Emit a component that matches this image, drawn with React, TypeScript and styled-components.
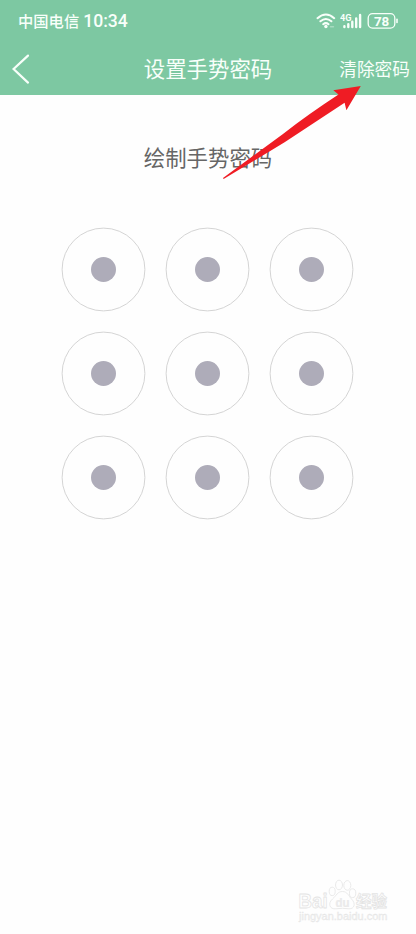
import React from 'react';
import styled, { createGlobalStyle } from 'styled-components';

const GlobalStyle = createGlobalStyle`
  * { box-sizing: border-box; }
  body { margin: 0; background: #fefefe; font-family: "Noto Sans CJK SC", sans-serif; }
`;

const Screen = styled.div`
  position: relative;
  width: 416px;
  height: 934px;
  overflow: hidden;
  background: #fefefe;
  display: flex;
  flex-direction: column;
`;

const Header = styled.header`
  height: 95.4px;
  flex: none;
  background: #7dc8a2;
  color: #f8fffa;
`;

const StatusBar = styled.div`
  height: 41px;
  padding: 0 17px 0 18px;
  display: flex;
  align-items: center;
  justify-content: space-between;
`;

const StatusGroup = styled.div`
  display: flex;
  align-items: center;
  line-height: 20px;
`;

const StatusIcons = styled(StatusGroup)`
  gap: 4px;
`;

const Carrier = styled.span`
  padding-bottom: 2px;
  font-size: 15.3px;
  font-weight: 500;
  white-space: nowrap;
`;

const Clock = styled.span`
  margin-left: 4px;
  font-family: Roboto, sans-serif;
  font-size: 17.6px;
  font-weight: 500;
  white-space: nowrap;
`;

const NavBar = styled.nav`
  height: 54px;
  display: grid;
  grid-template-columns: 100px 1fr 100px;
  align-items: center;
  line-height: 30px;
  white-space: nowrap;
`;

const BackButton = styled.button`
  border: 0;
  padding: 2px 0 0 11px;
  background: none;
  color: inherit;
  display: flex;
`;

const Title = styled.h1`
  margin: 0;
  font-size: 21.4px;
  font-weight: 400;
  line-height: 30px;
  text-align: center;
`;

const ClearButton = styled.button`
  border: 0;
  padding: 0 6px 0 0;
  background: none;
  color: inherit;
  font: 400 17.7px/30px "Noto Sans CJK SC", sans-serif;
  text-align: right;
  white-space: nowrap;
`;

const Main = styled.main`
  display: flex;
  flex-direction: column;
  align-items: center;
`;

const Prompt = styled.p`
  margin: 47px 0 0;
  height: 30px;
  color: #666;
  font-size: 21.4px;
  line-height: 30px;
`;

const PatternGrid = styled.div`
  margin: 55.6px 1px 0 0;
  display: grid;
  grid-template-columns: repeat(3, 83px);
  gap: 20.8px;
`;

const Node = styled.svg`
  display: block;
  width: 83px;
  height: 83px;
  overflow: visible;
`;

const Overlay = styled.svg`
  position: absolute;
  inset: 0;
  pointer-events: none;
`;

const Watermark = styled.svg`
  position: absolute;
  left: 296px;
  top: 876px;
`;

const WifiIcon = () => (
  <svg width="20" height="16" viewBox="0 0 20 16" fill="none" stroke="currentColor" strokeWidth="2" strokeLinecap="round">
    <path d="M1.5 5.2Q10-2.2 18.2 5.2M4.4 8.3Q9.9 3.7 15.4 8.3M7.2 11.2Q9.9 9.1 12.5 11.2" />
    <circle cx="9.9" cy="13.5" r="1.7" fill="currentColor" stroke="none" />
    <path d="M14.5 13.7h3" strokeWidth="1.4" opacity=".35" />
  </svg>
);

const SignalIcon = () => (
  <svg width="23" height="18" viewBox="0 0 23 18" fill="currentColor">
    <text x="0" y="8.5" fontFamily="Roboto, sans-serif" fontSize="9.8" fontWeight="700" textLength="11.5" lengthAdjust="spacingAndGlyphs">4G</text>
    <g stroke="currentColor" strokeWidth="2.4" strokeLinecap="round">
      <path d="M4.4 14.2v.8M8.3 12.2V15M12.3 9.8V15M16.2 6.4V15M20.1 3V15" />
    </g>
  </svg>
);

const BatteryIcon = () => (
  <svg width="32" height="18" viewBox="0 0 32 18" fill="none" stroke="currentColor">
    <rect x="1.2" y="1.6" width="26.6" height="14.5" rx="4.4" strokeWidth="1.3" />
    <path d="M30 7.4v3" strokeWidth="1.6" strokeLinecap="round" />
    <text x="14.6" y="13.6" textAnchor="middle" fill="currentColor" stroke="none" fontFamily="Roboto, sans-serif" fontSize="13.4" fontWeight="700">78</text>
  </svg>
);

const PatternNode = () => (
  <Node viewBox="0 0 83 83">
    <circle cx="41.5" cy="41.5" r="41.4" fill="none" stroke="#cfcfcf" strokeWidth=".9" />
    <circle cx="41.5" cy="41.5" r="12.5" fill="#aeacb9" />
  </Node>
);

const App = () => (
  <Screen>
    <GlobalStyle />
    <Header>
      <StatusBar>
        <StatusGroup>
          <Carrier>中国电信</Carrier>
          <Clock>10:34</Clock>
        </StatusGroup>
        <StatusIcons>
          <WifiIcon />
          <SignalIcon />
          <BatteryIcon />
        </StatusIcons>
      </StatusBar>
      <NavBar>
        <BackButton aria-label="返回">
          <svg width="20" height="32" viewBox="0 0 20 32" fill="none" stroke="currentColor" strokeWidth="2.2" strokeLinecap="round">
            <path d="M17 2.6 2.6 16 17 29.6" />
          </svg>
        </BackButton>
        <Title>设置手势密码</Title>
        <ClearButton>清除密码</ClearButton>
      </NavBar>
    </Header>
    <Main>
      <Prompt>绘制手势密码</Prompt>
      <PatternGrid>
        {Array.from({ length: 9 }, (_, i) => (
          <PatternNode key={i} />
        ))}
      </PatternGrid>
    </Main>
    <Overlay width="416" height="934" viewBox="0 0 416 934">
      <path fill="#ef1c24" d="M360.8 86 333.3 90.3 338.5 94.6Q308 114.5 283 134L223 178 223.6 179Q258 158.5 285 142L344.6 102.8 346.4 110.2Z" />
    </Overlay>
    <Watermark width="100" height="52" viewBox="0 0 100 52" fill="#fefefe" stroke="#e4e4e4" strokeWidth=".8" strokeLinejoin="round">
      <g fontFamily="Liberation Sans, sans-serif" fontWeight="700">
        <text x="2.6" y="32" fontSize="20" textLength="29" lengthAdjust="spacingAndGlyphs">Bai</text>
        <ellipse cx="36.2" cy="15.4" rx="3" ry="4.2" />
        <ellipse cx="43" cy="9" rx="3.5" ry="4.8" />
        <ellipse cx="51.3" cy="9.4" rx="3.5" ry="4.8" />
        <ellipse cx="56.6" cy="17.2" rx="3.2" ry="4.4" />
        <path d="M46.5 15.5C51.5 15.5 52.5 20 55.5 23C60 27.5 58.5 33 53 32.8Q46.5 31.8 40 32.8C33.5 33.5 31.5 27.5 36.5 23C40.5 19.5 41.5 15.5 46.5 15.5Z" />
        <text x="39.5" y="30.5" fontSize="13" fill="#ececec" strokeWidth=".2" textLength="14" lengthAdjust="spacingAndGlyphs">du</text>
        <text x="60" y="30.6" fontSize="15.5" fontFamily="Noto Sans CJK SC, sans-serif" textLength="31">经验</text>
        <text x="3" y="44" fontSize="10.8" fontWeight="400" fill="#f0f0f0" strokeWidth=".3" textLength="88.5" lengthAdjust="spacingAndGlyphs">jingyan.baidu.com</text>
      </g>
    </Watermark>
  </Screen>
);

export default App;
